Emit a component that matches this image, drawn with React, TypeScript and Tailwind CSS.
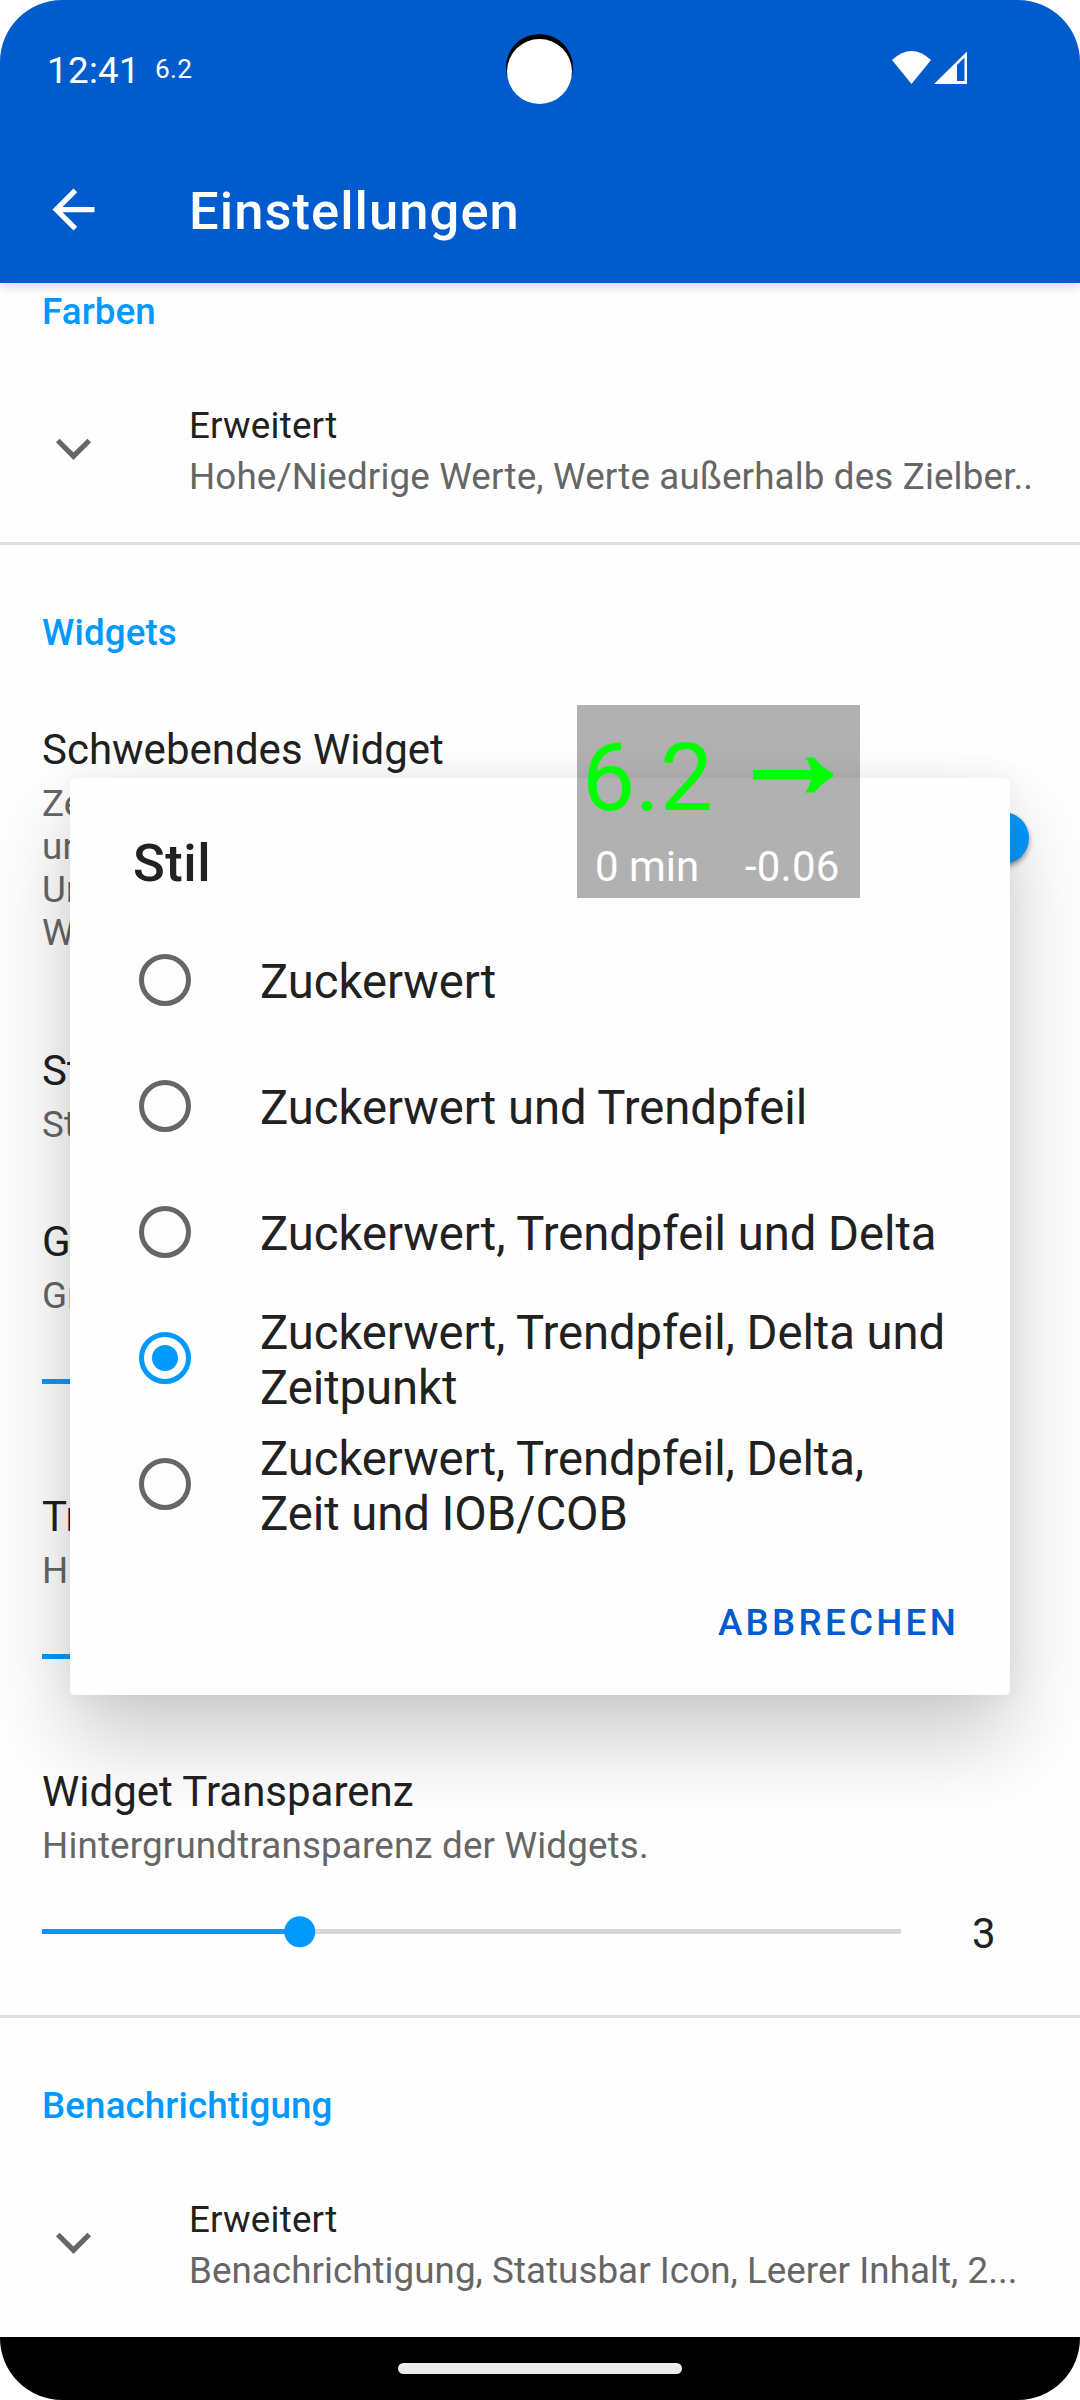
import React from "react";

const ChevronDown = () => (
  <svg viewBox="0 0 63 63" className="mb-[3px] h-[63px] w-[63px] shrink-0" fill="none" stroke="#666666" strokeWidth="5.2">
    <path d="M15.8 22.5 31.500 38.200 47.200 22.5" />
  </svg>
);

function SectionTitle({ children }: { children: React.ReactNode }) {
  return (
    <h2 className="mx-[42px] h-[43px] text-[36.75px] leading-[43px] font-medium tracking-[0.1px] whitespace-nowrap text-[#0099ff]">
      {children}
    </h2>
  );
}

function Expandable({ children }: { children: React.ReactNode }) {
  return (
    <div className="mt-[71px] flex h-[94px] items-center pl-[42px]">
      <ChevronDown />
      <div className="ml-[84px]">
        <div className="text-[36.75px] leading-[43px] tracking-[0.2px] text-[#212121]">Erweitert</div>
        <div className="mt-2 text-[36.75px] leading-[43px] whitespace-nowrap text-[#666666]">{children}</div>
      </div>
    </div>
  );
}

function Preference({ title, lines }: { title: string; lines: string[] }) {
  return (
    <div className="px-[42px] whitespace-nowrap">
      <div className="text-[42px] leading-[49px] text-[#212121]">{title}</div>
      <div className="mt-2 text-[36.75px] leading-[43px] tracking-[0.16px] text-[#666666]">
        {lines.map((line) => (
          <div key={line}>{line}</div>
        ))}
      </div>
    </div>
  );
}

function SliderRow({ value, fraction }: { value: number; fraction: number }) {
  return (
    <div className="mt-[62px] flex h-[5px] items-center pl-[42px]">
      <div className="relative h-[5px] w-[859px] bg-[#d6d6d6]">
        <div className="h-full bg-[#0099ff]" style={{ width: `${fraction * 100}%` }} />
        <div
          className="absolute top-1/2 h-[31.5px] w-[31.5px] -translate-x-1/2 -translate-y-1/2 rounded-full bg-[#0099ff]"
          style={{ left: `${fraction * 100}%` }}
        />
      </div>
      <span className="mt-[4px] ml-[71px] text-[42px] leading-[49px] text-[#212121]">{value}</span>
    </div>
  );
}

const options = [
  ["Zuckerwert"],
  ["Zuckerwert und Trendpfeil"],
  ["Zuckerwert, Trendpfeil und Delta"],
  ["Zuckerwert, Trendpfeil, Delta und", "Zeitpunkt"],
  ["Zuckerwert, Trendpfeil, Delta,", "Zeit und IOB/COB"],
];
const selected = 3;

function StyleDialog() {
  return (
    <div className="absolute top-[778px] left-[70px] flex h-[917px] w-[940px] flex-col rounded-[5px] bg-[#fefefe] shadow-[0_44px_84px_0_rgba(0,0,0,0.20),0_0_30px_rgba(0,0,0,0.05)]">
      <div className="mt-[55px] ml-[63px] text-[52.5px] leading-[61px] font-medium tracking-[0.5px] text-[#212121]">Stil</div>
      <div className="mt-[23px]">
        {options.map((lines, i) => (
          <div key={i} className="flex h-[126px] items-center pl-[69px]">
            <span
              className={
                i === selected
                  ? "flex h-[52px] w-[52px] items-center justify-center rounded-full border-[5px] border-[#0099ff]"
                  : "h-[52px] w-[52px] rounded-full border-[5px] border-[#666666]"
              }
            >
              {i === selected && <span className="h-[26px] w-[26px] rounded-full bg-[#0099ff]" />}
            </span>
            <span
              className={
                lines.length > 1
                  ? "mt-[6px] ml-[69px] text-[47.25px] leading-[55px] tracking-[-0.07px] whitespace-nowrap text-[#212121]"
                  : "mt-[4px] ml-[69px] text-[47.25px] leading-[55px] tracking-[-0.05px] whitespace-nowrap text-[#212121]"
              }
            >
              {lines.map((l) => (
                <span key={l} className="block">
                  {l}
                </span>
              ))}
            </span>
          </div>
        ))}
      </div>
      <button className="mt-[54px] mr-[51px] self-end text-[36.75px] leading-[43px] font-medium tracking-[3.28px] text-[#005ccc]">
        ABBRECHEN
      </button>
    </div>
  );
}

function FloatingWidget() {
  return (
    <div className="absolute top-[705px] left-[577px] h-[193px] w-[283px] bg-black/30">
      <div className="flex h-[137px] items-center">
        <span className="ml-[5px] w-[171px] pt-[8px] text-[94.5px] leading-[111px] text-[#00ff00]">6.2</span>
        <svg viewBox="0 0 80 36" className="mt-[3px] h-[36px] w-[80px]" fill="#00ff00">
          <path d="M0 13H58Q56.500 6 52.500 .5H61.500Q69 11 80 16V20Q70 25 61.500 35.500H52.500Q56.500 30 58 22.500H0Z" />
        </svg>
      </div>
      <div className="flex text-[42px] leading-[49px] text-white">
        <span className="ml-[18px] w-[150px]">0 min</span>
        <span className="tracking-[0.2px]">-0.06</span>
      </div>
    </div>
  );
}

export default function App() {
  return (
    <div className="h-[2400px] w-[1080px] overflow-hidden bg-white font-['Roboto',sans-serif]">
      <div className="relative flex h-[2400px] flex-col overflow-hidden rounded-[62px] bg-[#fefefe]">
        <header className="relative z-10 h-[283px] shrink-0 bg-[#005ccc] text-white shadow-[0_4px_10px_rgba(0,0,0,0.14)]">
          <div className="flex h-[136px] items-start">
            <span className="mt-[49px] ml-[47px] w-[108px] text-[36.75px] leading-[43px] tracking-[0.3px]">12:41</span>
            <span className="mt-[53px] w-[60px] text-[26.25px] leading-[32px] tracking-[0.3px]">6.2</span>
            <svg viewBox="0 0 76 34" className="mt-[51px] ml-[677px] h-[34px] w-[76px]" fill="white">
              <path d="M0 9Q19.500 -9 39 9L19.500 33Z" />
              <path fillRule="evenodd" d="M42 33 75 .5V33ZM65 14V30H72.500V6.500Z" />
            </svg>
          </div>
          <div className="flex h-[147px] items-center pl-[42px]">
            <svg viewBox="0 0 24 24" className="h-[63px] w-[63px]" fill="white">
              <path d="M20 11H7.830l5.590-5.590L12 4l-8 8 8 8 1.410-1.410L7.830 13H20z" />
            </svg>
            <h1 className="mt-[4px] ml-[84px] text-[52.5px] leading-[61px] font-medium tracking-[1.05px]">Einstellungen</h1>
          </div>
          <div className="absolute top-[34px] left-[506px] h-[67px] w-[67px] rounded-full bg-black" />
          <div className="absolute top-[39px] left-[507px] h-[65px] w-[65px] rounded-full bg-white" />
        </header>

        <main className="flex-1 overflow-hidden pt-[7px]">
          <SectionTitle>Farben</SectionTitle>
          <Expandable>
            <span className="tracking-[0.15px]">Hohe/Niedrige Werte, Werte außerhalb des Zielber..</span>
          </Expandable>
          <div className="mt-[44px] mb-[66px] h-[3px] bg-[#dedede]" />

          <SectionTitle>Widgets</SectionTitle>
          <div className="mt-[71px] flex items-center justify-between">
            <Preference title="Schwebendes Widget" lines={["Zeigt", "und", "Um", "Wert"]} />
            <div className="mr-[51px] mb-[4px] h-[52px] w-[52px] rounded-full bg-[#0099ff] shadow-[0_3px_5px_rgba(0,0,0,0.4)]" />
          </div>
          <div className="mt-[92px]">
            <Preference title="Stil" lines={["Stil"]} />
          </div>
          <div className="mt-[71px]">
            <Preference title="Größe" lines={["Größe"]} />
            <SliderRow value={5} fraction={0.5} />
          </div>
          <div className="mt-[108px]">
            <Preference title="Transparenz" lines={["Hinweis"]} />
            <SliderRow value={5} fraction={0.5} />
          </div>
          <div className="mt-[108px]">
            <Preference title="Widget Transparenz" lines={["Hintergrundtransparenz der Widgets."]} />
            <SliderRow value={3} fraction={0.3} />
          </div>
          <div className="mt-[81px] mb-[66px] h-[3px] bg-[#dedede]" />

          <SectionTitle>Benachrichtigung</SectionTitle>
          <Expandable>
            <span className="tracking-[0.05px]">Benachrichtigung, Statusbar Icon, Leerer Inhalt, 2...</span>
          </Expandable>
        </main>

        <footer className="flex h-[63px] shrink-0 items-center justify-center bg-black">
          <div className="h-[11px] w-[284px] rounded-full bg-[#ebebeb]" />
        </footer>

        <StyleDialog />
        <FloatingWidget />
      </div>
    </div>
  );
}
